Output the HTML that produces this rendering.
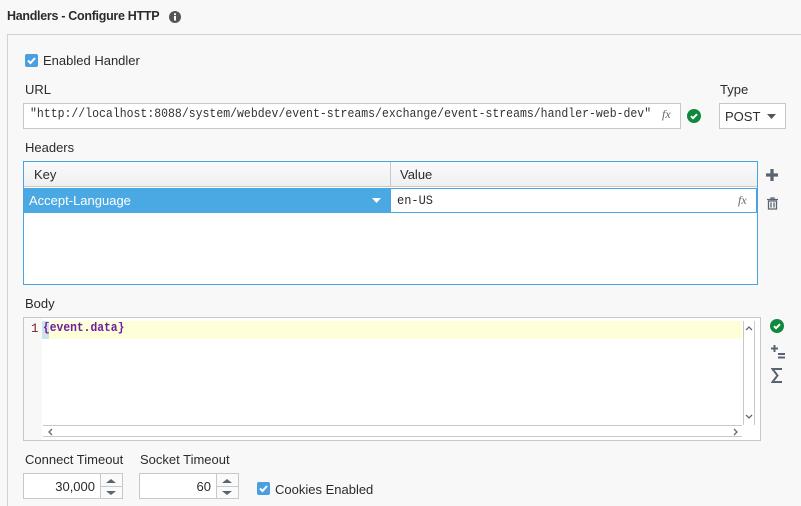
<!DOCTYPE html>
<html style="width:801px;height:506px;overflow:hidden"><head><style>
*{box-sizing:border-box;margin:0;padding:0}
body{width:801px;height:506px;background:#f8f8f8;font-family:"Liberation Sans",sans-serif;font-size:13px;color:#2b2b2b;position:relative;overflow:hidden}
.a{position:absolute}
.mono{font-family:"Liberation Mono",monospace}
.cb{width:13px;height:13px;background:#4a9fe0;border-radius:2px}
.inp{background:#fff;border:1px solid #c8c8c8}
</style></head><body>
<div class="a" style="left:7px;top:9px;font-weight:bold;font-size:12.5px;letter-spacing:-0.3px">Handlers - Configure HTTP</div>
<svg class="a" style="left:169px;top:11px" width="12" height="12"><circle cx="6" cy="6" r="6" fill="#555"/><rect x="5" y="5" width="2" height="4.5" fill="#fff"/><rect x="5" y="2.3" width="2" height="1.8" fill="#fff"/></svg>
<div class="a" style="left:7px;top:34px;width:800px;height:472px;border:1px solid #d2d2d2;border-bottom:none;background:#f8f8f8"></div>

<svg class="a cb" style="left:25px;top:54px" width="13" height="13"><path d="M3 6.5l2.5 2.5 4.5-5" stroke="#fff" stroke-width="2" fill="none"/></svg>
<div class="a" style="left:43px;top:53px">Enabled Handler</div>

<div class="a" style="left:25px;top:82px">URL</div>
<div class="a" style="left:720px;top:82px">Type</div>
<div class="a inp" style="left:23px;top:103px;width:658px;height:26px"></div>
<div class="a mono" style="left:30px;top:107px;font-size:11.5px;color:#333;white-space:nowrap;transform:scaleY(1.1);transform-origin:top left">"http://localhost:8088/system/webdev/event-streams/exchange/event-streams/handler-web-dev"</div>
<div class="a" style="left:662px;top:107px;font-family:'Liberation Serif',serif;font-style:italic;font-size:12px;color:#666">fx</div>
<svg class="a" style="left:687px;top:109px" width="14" height="14"><circle cx="7" cy="7" r="7" fill="#0f8a3c"/><path d="M4 7.2l2 2 4-4" stroke="#fff" stroke-width="2" fill="none"/></svg>
<div class="a inp" style="left:719px;top:103px;width:67px;height:26px"></div>
<div class="a" style="left:725px;top:109px">POST</div>
<svg class="a" style="left:767px;top:114px" width="10" height="6"><path d="M0 0h9l-4.5 5z" fill="#555"/></svg>

<div class="a" style="left:25px;top:140px">Headers</div>
<div class="a" style="left:23px;top:161px;width:735px;height:124px;border:1px solid #4aa3df;background:#fff"></div>
<div class="a" style="left:24px;top:162px;width:733px;height:25px;background:linear-gradient(#fafafa,#f0f0f0);border-bottom:1px solid #c8c8c8"></div>
<div class="a" style="left:390px;top:162px;width:1px;height:25px;background:#c8c8c8"></div>
<div class="a" style="left:34px;top:167px">Key</div>
<div class="a" style="left:400px;top:167px">Value</div>
<div class="a" style="left:24px;top:188px;width:366px;height:25px;background:#4aa8e3"></div>
<div class="a" style="left:29px;top:193px;color:#fff">Accept-Language</div>
<svg class="a" style="left:372px;top:198px" width="10" height="6"><path d="M0 0h9l-4.5 5z" fill="#fff"/></svg>
<div class="a" style="left:390px;top:188px;width:367px;height:25px;border:1px solid #4aa3df;background:#fff"></div>
<div class="a mono" style="left:397px;top:193px;font-size:12px;transform:scaleY(1.1);transform-origin:top left">en-US</div>
<div class="a" style="left:738px;top:193px;font-family:'Liberation Serif',serif;font-style:italic;font-size:12px;color:#666">fx</div>
<svg class="a" style="left:765px;top:168px" width="14" height="14"><path d="M7 1v12M1 7h12" stroke="#5a6470" stroke-width="3.2"/></svg>
<svg class="a" style="left:767px;top:197px" width="11" height="13"><path d="M0 2.5h11M4 2.5V1h3v1.5M1.5 4h8v8h-8zM4 5.5v5M7 5.5v5" stroke="#5a6470" stroke-width="1.3" fill="none"/></svg>

<div class="a" style="left:25px;top:296px">Body</div>
<div class="a" style="left:23px;top:317px;width:738px;height:124px;border:1px solid #c8c8c8;background:#fff"></div>
<div class="a" style="left:24px;top:318px;width:18px;height:122px;background:#f8f8f8"></div>
<div class="a" style="left:42px;top:321px;width:700px;height:18px;background:#fefed8"></div>
<div class="a" style="left:42px;top:321px;width:7px;height:18px;background:#cfe3ea"></div>
<div class="a mono" style="left:31px;top:322px;font-size:12.5px;color:#7a1a1a">1</div>
<div class="a mono" style="left:43px;top:322px;font-size:11.3px;color:#6a1f9e;font-weight:bold;transform:scaleY(1.15);transform-origin:top left">{event.data}</div>
<div class="a" style="left:743px;top:321px;width:12px;height:104px;border-left:1px solid #c8c8c8;border-right:1px solid #c8c8c8"></div>
<svg class="a" style="left:745px;top:325px" width="8" height="6"><path d="M1 5l3-3 3 3" stroke="#667" stroke-width="1.3" fill="none"/></svg>
<svg class="a" style="left:745px;top:414px" width="8" height="6"><path d="M1 1l3 3 3-3" stroke="#667" stroke-width="1.3" fill="none"/></svg>
<div class="a" style="left:43px;top:425px;width:699px;height:12px;border-top:1px solid #c8c8c8;border-bottom:1px solid #c8c8c8"></div>
<svg class="a" style="left:47px;top:428px" width="6" height="8"><path d="M5 1l-3 3 3 3" stroke="#667" stroke-width="1.3" fill="none"/></svg>
<svg class="a" style="left:733px;top:428px" width="6" height="8"><path d="M1 1l3 3-3 3" stroke="#667" stroke-width="1.3" fill="none"/></svg>
<svg class="a" style="left:770px;top:319px" width="14" height="14"><circle cx="7" cy="7" r="7" fill="#0f8a3c"/><path d="M4 7.2l2 2 4-4" stroke="#fff" stroke-width="2" fill="none"/></svg>
<svg class="a" style="left:771px;top:345px" width="14" height="14"><path d="M3.5 0v7M0 3.5h7" stroke="#5a6470" stroke-width="2"/><path d="M7 9h7M7 12.5h7" stroke="#5a6470" stroke-width="2"/></svg>
<svg class="a" style="left:771px;top:368px" width="12" height="15"><path d="M11 1H1.5l5 6.5-5 6.5H11" stroke="#5a6470" stroke-width="2" fill="none"/></svg>

<div class="a" style="left:25px;top:452px">Connect Timeout</div>
<div class="a" style="left:140px;top:452px">Socket Timeout</div>
<div class="a inp" style="left:23px;top:473px;width:100px;height:26px"></div>
<div class="a" style="left:100px;top:474px;width:22px;height:24px;border-left:1px solid #c8c8c8;background:#fafafa"></div>
<div class="a" style="left:101px;top:486px;width:21px;height:1px;background:#c8c8c8"></div>
<svg class="a" style="left:106px;top:478px" width="10" height="18"><path d="M0 5l5-4 5 4zM0 13l5 4 5-4z" fill="#5a6470"/></svg>
<div class="a" style="left:23px;top:479px;width:72px;text-align:right">30,000</div>
<div class="a inp" style="left:139px;top:473px;width:100px;height:26px"></div>
<div class="a" style="left:216px;top:474px;width:22px;height:24px;border-left:1px solid #c8c8c8;background:#fafafa"></div>
<div class="a" style="left:217px;top:486px;width:21px;height:1px;background:#c8c8c8"></div>
<svg class="a" style="left:222px;top:478px" width="10" height="18"><path d="M0 5l5-4 5 4zM0 13l5 4 5-4z" fill="#5a6470"/></svg>
<div class="a" style="left:139px;top:479px;width:72px;text-align:right">60</div>
<svg class="a cb" style="left:257px;top:482px" width="13" height="13"><path d="M3 6.5l2.5 2.5 4.5-5" stroke="#fff" stroke-width="2" fill="none"/></svg>
<div class="a" style="left:275px;top:482px">Cookies Enabled</div>
</body></html>
